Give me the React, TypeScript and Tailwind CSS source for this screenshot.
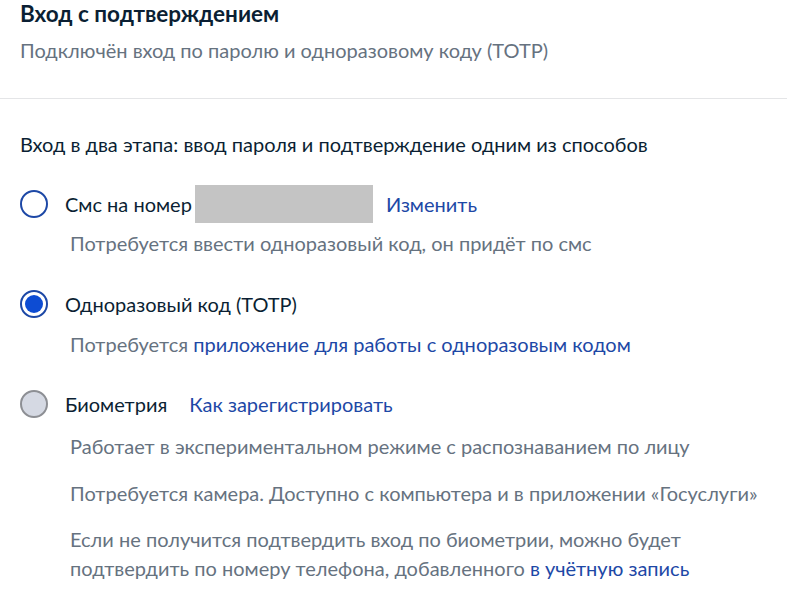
import React from 'react';

type RadioState = 'off' | 'on' | 'disabled';

function Radio({ state }: { state: RadioState }) {
    if (state === 'on') {
        return (
            <span className="w-7 h-7 shrink-0 rounded-full border-2 border-[#1d48a6] bg-white flex items-center justify-center">
                <span className="w-[18px] h-[18px] rounded-full bg-[#0d4cd3]" />
            </span>
        );
    }
    if (state === 'disabled') {
        return <span className="w-7 h-7 shrink-0 rounded-full border-2 border-[#8d8f94] bg-[#d5d9e3]" />;
    }
    return <span className="w-7 h-7 shrink-0 rounded-full border-2 border-[#1d48a6] bg-white" />;
}

export default function App() {
    return (
        <div className="w-[787px] h-[595px] bg-white overflow-hidden text-[#0b1f33]" style={{ fontFamily: 'Lato, "Noto Sans", sans-serif' }}>
            {/* Header */}
            <div className="px-5 pb-[34px] border-b border-[#e4e5e7]">
                <h2 className="text-[22.5px] leading-7 font-bold">Вход с подтверждением</h2>
                <p className="mt-2 text-[20px] leading-7 text-[#66727f]">Подключён вход по паролю и одноразовому коду (TOTP)</p>
            </div>

            <div className="px-5 pt-[31px] text-[20px]">
                <p className="leading-7">Вход в два этапа: ввод пароля и подтверждение одним из способов</p>

                {/* SMS */}
                <div className="mt-[27px] flex items-center h-[38px]">
                    <Radio state="off" />
                    <span className="ml-[17px]">Смс на номер</span>
                    <span className="ml-[3px] w-[178px] h-[38px] bg-[#c4c4c4]" />
                    <a className="ml-[13px] text-[#1d48a6]">Изменить</a>
                </div>
                <p className="mt-[6px] pl-[50px] leading-7 text-[#66727f]">Потребуется ввести одноразовый код, он придёт по смс</p>

                {/* TOTP */}
                <div className="mt-[33px] flex items-center h-7">
                    <Radio state="on" />
                    <span className="ml-[17px]">Одноразовый код (TOTP)</span>
                </div>
                <p className="mt-3 pl-[50px] leading-7 text-[#66727f]">
                    Потребуется <a className="text-[#1d48a6]">приложение для работы с одноразовым кодом</a>
                </p>

                {/* Biometrics */}
                <div className="mt-8 flex items-center h-7">
                    <Radio state="disabled" />
                    <span className="ml-[17px]">Биометрия</span>
                    <a className="ml-[22px] text-[#1d48a6]">Как зарегистрировать</a>
                </div>
                <div className="pl-[50px] text-[#66727f] leading-[29px]">
                    <p className="mt-[14px]">Работает в экспериментальном режиме с распознаванием по лицу</p>
                    <p className="mt-[18px]">Потребуется камера. Доступно с компьютера и в приложении «Госуслуги»</p>
                    <p className="mt-[17px]">
                        Если не получится подтвердить вход по биометрии, можно будет<br />
                        подтвердить по номеру телефона, добавленного <a className="text-[#1d48a6]">в учётную запись</a>
                    </p>
                </div>
            </div>
        </div>
    );
}
